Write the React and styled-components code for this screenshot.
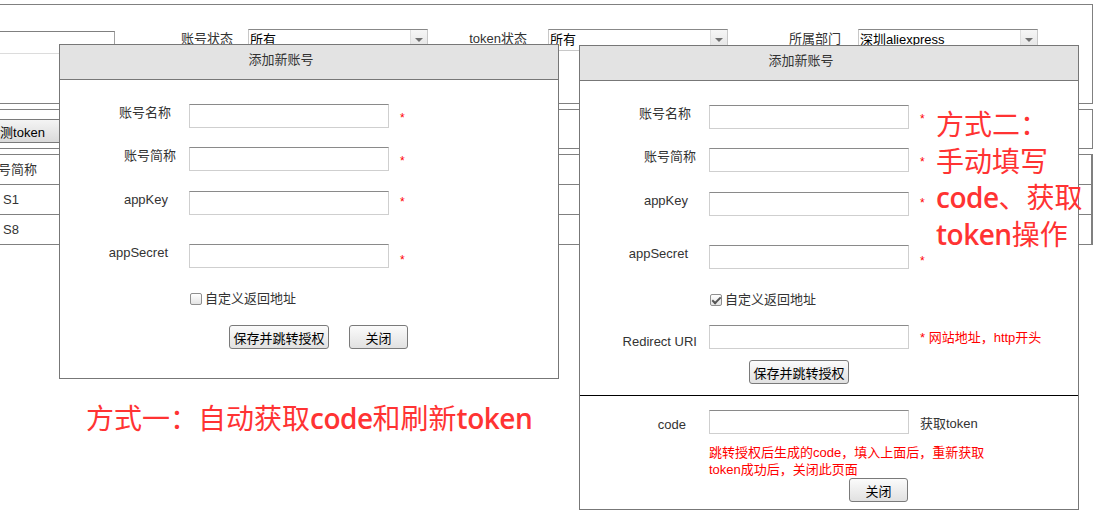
import React from "react";
import styled, { createGlobalStyle } from "styled-components";

const GlobalStyle = createGlobalStyle`
  html, body {
    margin: 0;
    padding: 0;
    background: #fff;
    overflow: hidden;
  }
  body {
    font-family: "Liberation Sans", "Noto Sans CJK SC", sans-serif;
    font-size: 13px;
    color: #333;
  }
`;

const fields = [
  { label: "账号名称", pr: 18, mt: 24, st: 2 },
  { label: "账号简称", pr: 13, mt: 19, st: 2 },
  { label: "appKey", pr: 21, mt: 20, st: -1 },
  { label: "appSecret", pr: 21, mt: 29, st: 4 },
];

export default function App() {
  return (
    <Page>
      <GlobalStyle />

      <Panel $h={100}>
        <FilterRow>
          <SearchInput />
          <FilterLabel $w={118} $gap={15}>账号状态</FilterLabel>
          <Select>
            <SelectText>所有</SelectText>
            <SelectArrow />
          </Select>
          <FilterLabel $w={99} $gap={21}>token状态</FilterLabel>
          <Select>
            <SelectText>所有</SelectText>
            <SelectArrow />
          </Select>
          <FilterLabel $w={113} $gap={17}>所属部门</FilterLabel>
          <Select>
            <SelectText>深圳aliexpress</SelectText>
            <SelectArrow />
          </Select>
        </FilterRow>
      </Panel>

      <Panel $h={40} $mt={5}>
        <ToolButton $w={92}>检测token</ToolButton>
      </Panel>

      <Table>
        <TableRow>
          <Cell>账号简称</Cell>
        </TableRow>
        <TableRow>
          <Cell>S1</Cell>
        </TableRow>
        <TableRow>
          <Cell>S8</Cell>
        </TableRow>
      </Table>

      <Dialog $x={59} $y={44} $h={335}>
        <DialogTitle>添加新账号</DialogTitle>
        <AccountFields />
        <CheckRow $mt={23}>
          <Check />
          <span>自定义返回地址</span>
        </CheckRow>
        <ButtonRow $indent={169} $mt={18}>
          <Button $w={100}>保存并跳转授权</Button>
          <Button $w={59}>关闭</Button>
        </ButtonRow>
      </Dialog>

      <Dialog $x={579} $y={45} $h={465}>
        <DialogTitle>添加新账号</DialogTitle>
        <Section $divider>
          <AccountFields />
          <CheckRow $mt={23}>
            <Check defaultChecked />
            <span>自定义返回地址</span>
          </CheckRow>
          <FieldRow $mt={17}>
            <FieldLabel $pr={12} $lt={9}>Redirect URI</FieldLabel>
            <TextInput />
            <Hint>* 网站地址，http开头</Hint>
          </FieldRow>
          <ButtonRow $indent={169} $mt={11}>
            <Button $w={100}>保存并跳转授权</Button>
          </ButtonRow>
        </Section>
        <Section>
          <FieldRow $mt={14}>
            <FieldLabel $pr={23} $lt={7}>code</FieldLabel>
            <TextInput />
            <Aside>获取token</Aside>
          </FieldRow>
          <Note>
            跳转授权后生成的code，填入上面后，重新获取
            <br />
            token成功后，关闭此页面
          </Note>
          <ButtonRow $indent={269} $mt={0}>
            <Button $w={59}>关闭</Button>
          </ButtonRow>
        </Section>
      </Dialog>

      <Annotation $x={86} $y={400}>
        方式一：自动获取<Latin>code</Latin>和刷新<Latin>token</Latin>
      </Annotation>
      <Annotation $x={936} $y={106}>
        方式二：
        <br />
        手动填写
        <br />
        <Latin>code</Latin>、获取
        <br />
        <Latin>token</Latin>操作
      </Annotation>
    </Page>
  );
}

function AccountFields() {
  return fields.map((f) => (
    <FieldRow key={f.label} $mt={f.mt}>
      <FieldLabel $pr={f.pr}>{f.label}</FieldLabel>
      <TextInput />
      <Star $st={f.st}>*</Star>
    </FieldRow>
  ));
}

const Page = styled.div`
  position: relative;
  width: 1098px;
  height: 525px;
  padding-top: 4px;
  box-sizing: border-box;
  overflow: hidden;
`;

const Panel = styled.div`
  width: 1093px;
  height: ${(p) => p.$h}px;
  margin-top: ${(p) => p.$mt || 0}px;
  box-sizing: border-box;
  border: 1px solid #808080;
  border-left: none;
`;

const FilterRow = styled.div`
  display: flex;
  align-items: flex-start;
  padding-top: 24px;
`;

const SearchInput = styled.input`
  flex: none;
  width: 115px;
  height: 23px;
  margin: 2px 0 0;
  padding: 0;
  box-sizing: border-box;
  border: 1px solid #a0a0a0;
  border-top-color: #808080;
  border-bottom-color: #dcdcdc;
  border-left: none;
  outline: none;
`;

const FilterLabel = styled.span`
  flex: none;
  width: ${(p) => p.$w}px;
  margin-right: ${(p) => p.$gap}px;
  text-align: right;
  line-height: 20px;
  white-space: nowrap;
`;

const Select = styled.div`
  flex: none;
  display: flex;
  width: 180px;
  height: 22px;
  box-sizing: border-box;
  border: 1px solid #c8c8c8;
  border-top-color: #888;
  background: #fff;
`;

const SelectText = styled.span`
  flex: 1;
  padding-left: 1px;
  line-height: 20px;
  color: #000;
`;

const SelectArrow = styled.span`
  width: 16px;
  display: flex;
  align-items: center;
  justify-content: center;
  background: linear-gradient(#f6f6f6, #e2e2e2);
  border-left: 1px solid #ddd;
  &::after {
    content: "";
    border-left: 4px solid transparent;
    border-right: 4px solid transparent;
    border-top: 4px solid #707070;
  }
`;

const Button = styled.button`
  flex: none;
  width: ${(p) => p.$w}px;
  height: 24px;
  margin: 0;
  padding: 0;
  box-sizing: border-box;
  border: 1px solid #7a7a7a;
  border-radius: 3px;
  background: linear-gradient(#fbfbfb, #e1e1e1);
  font: inherit;
  color: #000;
  white-space: nowrap;
`;

const ToolButton = styled(Button)`
  display: block;
  margin: 9px 0 0 -30px;
  background: linear-gradient(#f4f4f4, #dadada);
`;

const Table = styled.div`
  width: 1093px;
  margin-top: 5px;
  box-sizing: border-box;
  border-top: 1px solid #808080;
  border-right: 2px solid #808080;
`;

const TableRow = styled.div`
  display: flex;
  height: 29px;
  border-bottom: 1px solid #808080;
`;

const Cell = styled.div`
  flex: none;
  width: 100px;
  margin-left: -39px;
  text-align: center;
  line-height: 29px;
`;

const Dialog = styled.section`
  position: absolute;
  left: ${(p) => p.$x}px;
  top: ${(p) => p.$y}px;
  width: 500px;
  height: ${(p) => p.$h}px;
  box-sizing: border-box;
  border: 1px solid #777;
  background: #fff;
`;

const DialogTitle = styled.header`
  height: 34px;
  padding-right: 56px;
  line-height: 29px;
  text-align: center;
  background: #e3e3e3;
  border-bottom: 1px solid #777;
`;

const Section = styled.div`
  padding-bottom: ${(p) => (p.$divider ? 11 : 0)}px;
  border-bottom: ${(p) => (p.$divider ? "1px solid #000" : "none")};
`;

const FieldRow = styled.div`
  display: flex;
  align-items: flex-start;
  height: 24px;
  margin-top: ${(p) => p.$mt}px;
`;

const FieldLabel = styled.label`
  flex: none;
  width: 129px;
  box-sizing: border-box;
  padding-right: ${(p) => p.$pr}px;
  margin-top: ${(p) => (p.$lt === undefined ? 1 : p.$lt)}px;
  text-align: right;
  line-height: 16px;
  white-space: nowrap;
`;

const TextInput = styled.input`
  flex: none;
  width: 200px;
  height: 24px;
  box-sizing: border-box;
  margin: 0;
  padding: 0 3px;
  border: 1px solid #cfcfcf;
  border-top-color: #8a8a8a;
  font: inherit;
  outline: none;
`;

const Star = styled.span`
  margin-left: 11px;
  margin-top: ${(p) => p.$st}px;
  line-height: 24px;
  font-size: 12px;
  color: #f00;
`;

const Hint = styled.span`
  margin-left: 11px;
  margin-top: 5px;
  line-height: 16px;
  color: #f00;
  white-space: nowrap;
`;

const Aside = styled.span`
  margin-left: 11px;
  margin-top: 6px;
  line-height: 16px;
  white-space: nowrap;
`;

const Note = styled.p`
  margin: 10px 0 0 129px;
  line-height: 17px;
  color: #f00;
  white-space: nowrap;
`;

const CheckRow = styled.label`
  display: flex;
  align-items: center;
  gap: 3px;
  height: 16px;
  margin: ${(p) => p.$mt}px 0 0 130px;
  line-height: 16px;
`;

const Check = styled.input.attrs({ type: "checkbox" })`
  appearance: none;
  position: relative;
  flex: none;
  width: 12px;
  height: 12px;
  margin: 0;
  border: 1px solid #8f8f8f;
  border-radius: 2px;
  background: linear-gradient(#fff, #e4e4e4);
  &:checked::after {
    content: "";
    position: absolute;
    left: 3px;
    top: 0;
    width: 3px;
    height: 7px;
    border: solid #555;
    border-width: 0 2px 2px 0;
    transform: rotate(45deg);
  }
`;

const ButtonRow = styled.div`
  display: flex;
  gap: 20px;
  margin: ${(p) => p.$mt}px 0 0 ${(p) => p.$indent}px;
`;

const Annotation = styled.div`
  position: absolute;
  left: ${(p) => p.$x}px;
  top: ${(p) => p.$y}px;
  font-family: "Open Sans", "Noto Sans CJK SC", sans-serif;
  font-size: 28px;
  line-height: 36.5px;
  color: #f33;
  white-space: nowrap;
`;

const Latin = styled.span`
  font-weight: 600;
  letter-spacing: -0.5px;
`;
